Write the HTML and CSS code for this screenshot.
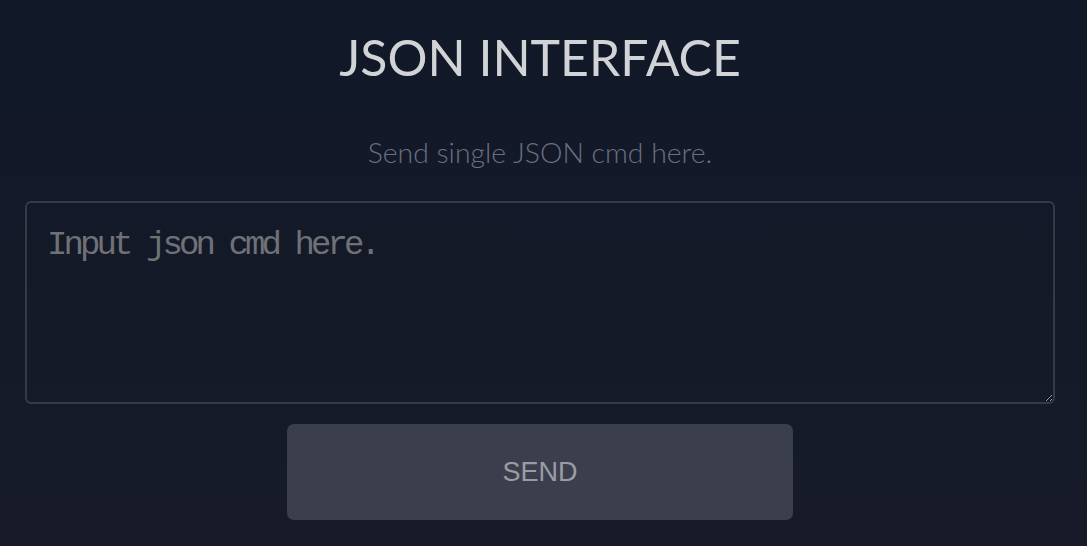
FILE: index.html
```html
<!DOCTYPE html>
<html>
<head>
<meta charset="utf-8">
<link rel="stylesheet" href="styles.css">
</head>
<body>
<main class="page">
  <h1 class="title">JSON INTERFACE</h1>
  <p class="subtitle">Send single JSON cmd here.</p>
  <textarea class="cmd" placeholder="Input json cmd here."></textarea>
  <button class="send">SEND</button>
</main>
</body>
</html>
```
FILE: styles.css
```css
html, body {
  margin: 0;
  height: 100%;
}
body {
  background: linear-gradient(#111827, #171b29);
  overflow: hidden;
}
.page {
  display: flex;
  flex-direction: column;
  align-items: center;
  padding: 0 32px 0 25px;
}
.title {
  margin: 31px 0 0;
  font-family: "Lato", sans-serif;
  font-weight: 400;
  font-size: 50px;
  line-height: 52px;
  color: #d1d3d6;
}
.subtitle {
  margin: 52px 0 0;
  font-family: "Lato", sans-serif;
  font-weight: 300;
  font-size: 28.4px;
  line-height: 34px;
  color: #6b7080;
}
.cmd {
  margin-top: 32px;
  box-sizing: border-box;
  width: 1030px;
  height: 203px;
  background: transparent;
  border: 2px solid #353a48;
  border-radius: 6px;
  padding: 23px 20px;
  font-family: "Liberation Mono", monospace;
  font-size: 34px;
  letter-spacing: -3.9px;
  color: #d1d3d6;
  outline: none;
}
.cmd::placeholder {
  color: #6f7176;
}
.send {
  margin-top: 20px;
  width: 506px;
  height: 96px;
  border: none;
  border-radius: 7px;
  background: #3b3f4d;
  color: #9a9ca4;
  font-family: "Liberation Sans", Arial, sans-serif;
  font-size: 27px;
}
```
